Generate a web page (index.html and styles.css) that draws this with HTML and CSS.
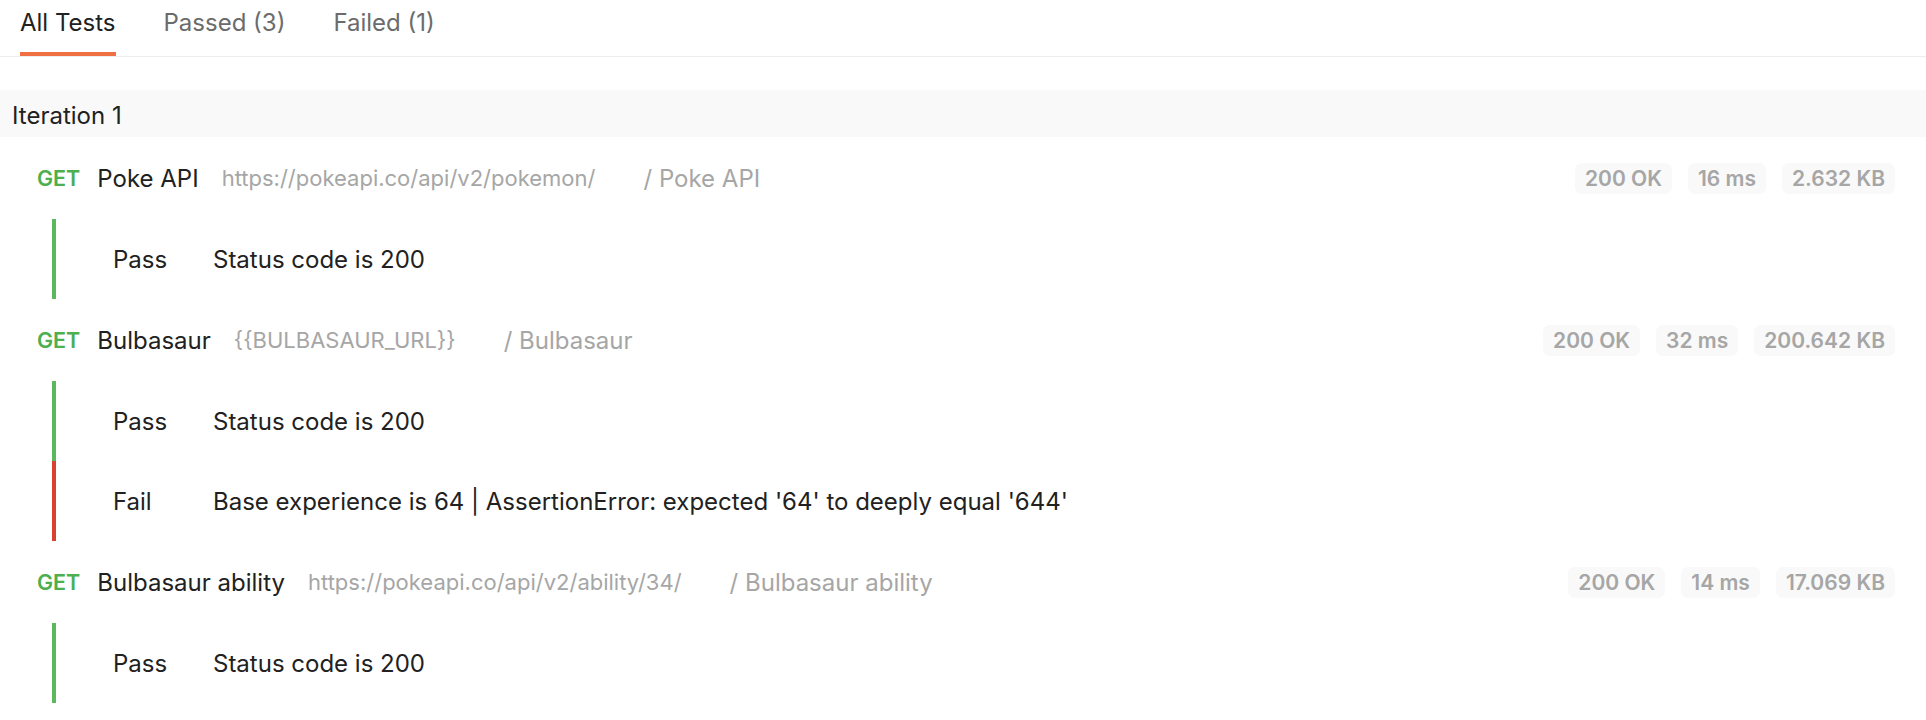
FILE: index.html
```html
<!DOCTYPE html>
<html>
<head>
<meta charset="utf-8">
<link rel="stylesheet" href="styles.css">
</head>
<body>
<div class="tabs">
  <div class="tab active">All Tests</div>
  <div class="tab">Passed (3)</div>
  <div class="tab">Failed (1)</div>
</div>
<div class="results">
  <div class="iteration">Iteration 1</div>

  <div class="request">
    <span class="method">GET</span>
    <span class="name">Poke API</span>
    <span class="url">https://pokeapi.co/api/v2/pokemon/</span>
    <span class="path">/ Poke API</span>
    <div class="meta">
      <span class="badge">200 OK</span>
      <span class="badge">16 ms</span>
      <span class="badge">2.632 KB</span>
    </div>
  </div>
  <div class="tests">
    <div class="test pass"><span class="status">Pass</span><span class="desc">Status code is 200</span></div>
  </div>

  <div class="request">
    <span class="method">GET</span>
    <span class="name">Bulbasaur</span>
    <span class="url">{{BULBASAUR_URL}}</span>
    <span class="path">/ Bulbasaur</span>
    <div class="meta">
      <span class="badge">200 OK</span>
      <span class="badge">32 ms</span>
      <span class="badge">200.642 KB</span>
    </div>
  </div>
  <div class="tests">
    <div class="test pass"><span class="status">Pass</span><span class="desc">Status code is 200</span></div>
    <div class="test fail"><span class="status">Fail</span><span class="desc">Base experience is 64 | AssertionError: expected '64' to deeply equal '644'</span></div>
  </div>

  <div class="request">
    <span class="method">GET</span>
    <span class="name">Bulbasaur ability</span>
    <span class="url">https://pokeapi.co/api/v2/ability/34/</span>
    <span class="path">/ Bulbasaur ability</span>
    <div class="meta">
      <span class="badge">200 OK</span>
      <span class="badge">14 ms</span>
      <span class="badge">17.069 KB</span>
    </div>
  </div>
  <div class="tests">
    <div class="test pass"><span class="status">Pass</span><span class="desc">Status code is 200</span></div>
  </div>
</div>
</body>
</html>
```

FILE: styles.css
```css
html, body {
  margin: 0;
  padding: 0;
  background: #ffffff;
}
body {
  font-family: Inter, "Noto Sans", "Liberation Sans", sans-serif;
  font-size: 24px;
  color: #212121;
}
.tabs {
  display: flex;
  gap: 48px;
  padding-left: 20px;
  height: 56px;
  border-bottom: 1px solid #ededed;
  box-sizing: content-box;
}
.tab {
  height: 56px;
  box-sizing: border-box;
  padding-top: 9px;
  line-height: 28px;
  color: #6b6b6b;
  border-bottom: 4px solid transparent;
}
.tab.active {
  color: #212121;
  border-bottom-color: #f07043;
}
.results {
  margin-top: 33px;
}
.iteration {
  height: 47px;
  box-sizing: border-box;
  padding-top: 5px;
  line-height: 42px;
  padding-left: 12px;
  background: #f9f9f9;
}
.request {
  display: flex;
  align-items: center;
  height: 82px;
  padding-left: 37px;
  padding-right: 31px;
}
.request:first-of-type {
  height: 81px;
}
.method {
  color: #4caf50;
  font-weight: 600;
  font-size: 21.5px;
  margin-right: 17px;
}
.name {
  color: #212121;
  margin-right: 23px;
}
.url {
  color: #a6a6a6;
  font-size: 22px;
  margin-right: 48px;
}
.path {
  color: #a6a6a6;
}
.meta {
  margin-left: auto;
  display: flex;
  gap: 16px;
}
.badge {
  height: 31px;
  line-height: 31px;
  padding: 0 10px;
  border-radius: 7px;
  background: #f9f9f9;
  color: #a6a6a6;
  font-weight: 600;
  font-size: 21px;
}
.tests {
  margin-left: 52px;
}
.test {
  display: flex;
  align-items: center;
  height: 80px;
  padding-left: 57px;
  border-left: 4px solid #5cb85c;
}
.test.fail {
  border-left-color: #d9412e;
}
.status {
  width: 100px;
  flex: none;
}
```
